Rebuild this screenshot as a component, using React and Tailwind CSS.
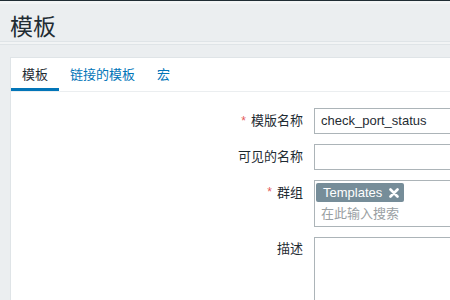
export default function App() {
  const font = { fontFamily: '"Liberation Sans", Arial, "Noto Sans CJK SC", sans-serif' };
  return (
    <div className="w-[450px] h-[300px] overflow-hidden bg-[#ebeef0] text-[#1f2c33]" style={font}>
      <div className="h-px bg-[#1f2c33]" />
      <div className="h-[3px] bg-[#f2f4f5]" />
      <div className="h-[38px] flex items-start pl-[10px] border-b border-[#dfe4e7]">
        <h1 className="text-[23px] leading-[28px] mt-[9px] font-normal">模板</h1>
      </div>
      <div className="h-[3px] bg-[#f2f4f5] border-b border-[#dfe4e7]" />
      <div className="pt-[12px] pl-[10px]">
        <div className="w-[600px] h-[260px] bg-white border-l border-t border-[#dfe4e7]">
          <div className="flex h-[34px] border-b border-[#ebeef0] text-[13px]">
            <div className="px-[11px] flex items-center border-b-[3px] border-[#0275b8] pt-[3px]">模板</div>
            <div className="px-[11px] flex items-center text-[#0275b8]">链接的模板</div>
            <div className="px-[11px] flex items-center text-[#0275b8]">宏</div>
          </div>
          <div className="pt-[16px] grid grid-cols-[292px_1fr] gap-x-[11px] gap-y-[10px] text-[13px]">
            <div className="flex items-center justify-end h-[26px]">
              <span className="text-[#e45959] mr-[5px] text-[12px]">*</span>模版名称
            </div>
            <div className="h-[26px] w-[300px] border border-[#acb4b8] flex items-center px-[6px]">
              check_port_status
            </div>

            <div className="flex items-center justify-end h-[26px]">可见的名称</div>
            <div className="h-[26px] w-[300px] border border-[#acb4b8]" />

            <div className="flex items-start justify-end pt-[3px]">
              <span className="text-[#e45959] mr-[5px] text-[12px]">*</span>群组
            </div>
            <div className="h-[47px] w-[300px] border border-[#acb4b8] pt-[2px] pl-px">
              <div className="inline-flex items-center h-[19px] bg-[#768d99] text-white rounded-[2px] pl-[7px] pr-[5px] gap-[7px]">
                <span>Templates</span>
                <svg width="10" height="10" viewBox="0 0 10 10">
                  <path d="M1.5 1.5 L8.5 8.5 M8.5 1.5 L1.5 8.5" stroke="white" strokeWidth="2.6" strokeLinecap="round" />
                </svg>
              </div>
              <div className="text-[#9aa0a3] pl-[5px] leading-[22px]">在此输入搜索</div>
            </div>

            <div className="flex items-start justify-end pt-[2px]">描述</div>
            <div className="h-[80px] w-[300px] border border-[#acb4b8]" />
          </div>
        </div>
      </div>
    </div>
  );
}
